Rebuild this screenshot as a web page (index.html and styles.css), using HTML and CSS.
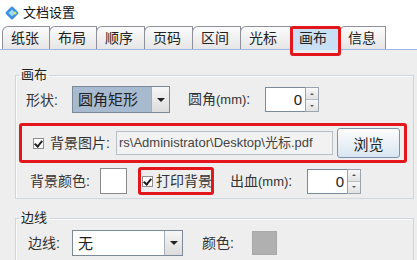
FILE: index.html
```html
<!DOCTYPE html>
<html lang="zh-CN">
<head>
    <meta charset="UTF-8">
    <title>文档设置</title>
    <link rel="stylesheet" href="styles.css">
</head>
<body>
    <div class="window">
        <div class="titlebar">
            <svg class="app-icon" width="16" height="16" viewBox="0 0 16 16">
                <rect x="3" y="3" width="10" height="10" rx="1.5" transform="rotate(45 8 8)" fill="#3b8fe0"/>
                <rect x="5.5" y="5.5" width="5" height="5" transform="rotate(45 8 8)" fill="#9fd6f7"/>
                <circle cx="11" cy="8" r="1.6" fill="#c8e86a"/>
            </svg>
            <span class="title">文档设置</span>
        </div>

        <div class="tabs">
            <div class="tab" style="width: 48px">纸张</div>
            <div class="tab" style="width: 48px">布局</div>
            <div class="tab" style="width: 49px">顺序</div>
            <div class="tab" style="width: 49px">页码</div>
            <div class="tab" style="width: 49px">区间</div>
            <div class="tab" style="width: 51px">光标</div>
            <div class="tab active" style="width: 50px">画布</div>
            <div class="tab" style="width: 47px">信息</div>
        </div>

        <div class="content">
            <fieldset class="group canvas-group">
                <legend>画布</legend>

                <div class="row row-shape">
                    <span class="label shape-label">形状:</span>
                    <div class="combo combo-selected shape-combo">
                        <span class="combo-value">圆角矩形</span>
                        <span class="combo-arrow"></span>
                    </div>
                    <span class="label radius-label">圆角<small>(mm)</small>:</span>
                    <div class="spinner">
                        <span class="spinner-value">0</span>
                        <span class="spinner-buttons">
                            <span class="spin-up"></span>
                            <span class="spin-down"></span>
                        </span>
                    </div>
                </div>

                <div class="row mark mark-image">
                    <span class="check checked"></span>
                    <span class="label image-label">背景图片:</span>
                    <div class="path-field">rs\Administrator\Desktop\光标.pdf</div>
                    <button class="btn">浏览</button>
                </div>

                <div class="row row-color">
                    <span class="label color-label">背景颜色:</span>
                    <span class="swatch swatch-white"></span>
                    <span class="mark mark-print">
                        <span class="check checked"></span>
                        <span class="label">打印背景</span>
                    </span>
                    <span class="label bleed-label">出血<small>(mm)</small>:</span>
                    <div class="spinner">
                        <span class="spinner-value">0</span>
                        <span class="spinner-buttons">
                            <span class="spin-up"></span>
                            <span class="spin-down"></span>
                        </span>
                    </div>
                </div>
            </fieldset>

            <fieldset class="group border-group">
                <legend>边线</legend>
                <div class="row row-border">
                    <span class="label border-label">边线:</span>
                    <div class="combo border-combo">
                        <span class="combo-value">无</span>
                        <span class="combo-arrow"></span>
                    </div>
                    <span class="label line-color-label">颜色:</span>
                    <span class="swatch swatch-gray"></span>
                </div>
            </fieldset>
        </div>
    </div>
</body>
</html>
```

FILE: styles.css
```css
* {
    margin: 0;
    padding: 0;
    box-sizing: border-box;
}

body {
    width: 417px;
    height: 260px;
    overflow: hidden;
    background-color: #eeeeee;
    color: #222222;
    font-family: 'Liberation Sans', 'Noto Sans CJK SC', sans-serif;
    font-size: 14px;
    line-height: 16px;
}

/* title bar */
.titlebar {
    height: 25px;
    background-color: #ffffff;
    display: flex;
    align-items: center;
    padding-left: 4px;
    gap: 3px;
}

.title {
    font-size: 13px;
    color: #111111;
}

/* tab strip */
.tabs {
    height: 25px;
    display: flex;
    align-items: flex-end;
    padding-left: 2px;
    background-color: #ffffff;
    border-bottom: 1px solid #9cb8dc;
}

.tab {
    height: 23px;
    border: 1px solid #8d9099;
    border-bottom: none;
    border-top-left-radius: 6px;
    margin-right: -1px;
    background: linear-gradient(#fbfbfb, #e6e6e6);
    padding-left: 8px;
    line-height: 22px;
    font-size: 14px;
    position: relative;
}

.tab.active {
    background: #c8dff4;
    height: 24px;
    margin-bottom: -1px;
    z-index: 1;
}

.tab.active::after {
    content: '';
    position: absolute;
    left: -1px;
    right: -2px;
    top: -1px;
    bottom: -6px;
    border: 3px solid #e3161c;
    border-radius: 3px;
}

/* groups */
.content {
    padding-top: 17px;
}

.group {
    margin: 0 3px 0 15px;
    border: 1px solid #cfd6dd;
    box-shadow: inset 1px 1px 0 #fafafa;
    padding: 0;
}

.group legend {
    font-size: 13px;
    line-height: 16px;
    padding: 0 2px;
    margin-left: 3px;
}

.canvas-group {
    padding-bottom: 3px;
}

.border-group {
    margin-top: 11px;
    height: 60px;
}

.row {
    display: flex;
    align-items: center;
}

.label {
    white-space: nowrap;
    color: #333333;
}

.label small {
    font-size: 13px;
}

/* row: shape */
.row-shape {
    margin-top: 3px;
    height: 27px;
    padding-left: 10px;
}

.shape-label {
    width: 46px;
}

.radius-label {
    margin-left: 18px;
    width: 77px;
}

/* combo boxes */
.combo {
    display: flex;
    height: 27px;
    border: 1px solid #7b8a99;
    background-color: #ffffff;
}

.combo-selected .combo-value {
    background-color: #a8bad0;
}

.shape-combo {
    width: 98px;
}

.border-combo {
    width: 111px;
    height: 26px;
}

.combo-value {
    flex: 1;
    padding-left: 5px;
    line-height: 25px;
    font-size: 15px;
}

.combo-arrow {
    width: 18px;
    border-left: 1px solid #a6b0ba;
    background: linear-gradient(#f6f6f6, #dcdcdc);
    display: flex;
    align-items: center;
    justify-content: center;
}

.combo-arrow::before {
    content: '';
    border-left: 4px solid transparent;
    border-right: 4px solid transparent;
    border-top: 4px solid #222222;
}

/* spinners */
.spinner {
    display: flex;
    width: 54px;
    height: 25px;
}

.spinner-value {
    flex: 1;
    background-color: #ffffff;
    border: 1px solid #7b8a99;
    border-right: none;
    text-align: right;
    padding-right: 3px;
    line-height: 23px;
    font-size: 15px;
}

.spinner-buttons {
    width: 14px;
    display: flex;
    flex-direction: column;
    border: 1px solid #9aa4ae;
}

.spin-up,
.spin-down {
    flex: 1;
    background: linear-gradient(#f8f8f8, #e2e2e2);
    display: flex;
    align-items: center;
    justify-content: center;
}

.spin-up {
    border-bottom: 1px solid #b4bcc4;
}

.spin-up::before {
    content: '';
    border-left: 2px solid transparent;
    border-right: 2px solid transparent;
    border-bottom: 2px solid #555555;
}

.spin-down::before {
    content: '';
    border-left: 2px solid transparent;
    border-right: 2px solid transparent;
    border-top: 2px solid #555555;
}

/* checkboxes */
.check {
    width: 11px;
    height: 11px;
    border: 1px solid #8f8f8f;
    background-color: #ffffff;
    position: relative;
    flex-shrink: 0;
}

.check.checked::after {
    content: '';
    position: absolute;
    left: 2px;
    top: 0;
    width: 3px;
    height: 6px;
    border-right: 2px solid #222222;
    border-bottom: 2px solid #222222;
    transform: rotate(40deg);
}

/* red highlight marks */
.mark {
    border: 3px solid #e3161c;
    border-radius: 3px;
}

.mark-image {
    margin: 10px 0 0 3px;
    width: 388px;
    height: 40px;
    padding-left: 11px;
}

.image-label {
    margin-left: 6px;
    width: 66px;
}

.path-field {
    width: 217px;
    height: 24px;
    border: 1px solid #b8bec5;
    background-color: #f2f2f2;
    color: #444444;
    font-size: 13px;
    line-height: 22px;
    padding-left: 2px;
    white-space: nowrap;
    overflow: hidden;
}

.btn {
    margin-left: 4px;
    width: 63px;
    height: 30px;
    border: 1px solid #7d93ad;
    border-radius: 3px;
    background: linear-gradient(#fdfdfd, #d9e5f1);
    font-family: inherit;
    font-size: 15px;
    color: #222222;
}

/* row: colour */
.row-color {
    margin-top: 4px;
    height: 28px;
    padding-left: 14px;
}

.color-label {
    width: 70px;
}

.swatch {
    display: block;
    border: 1px solid #8a8a8a;
}

.swatch-white {
    width: 27px;
    height: 26px;
    background-color: #ffffff;
}

.mark-print {
    display: flex;
    align-items: center;
    margin-left: 11px;
    width: 76px;
    height: 28px;
    padding-left: 1px;
}

.mark-print .label {
    margin-left: 3px;
    font-size: 14px;
}

.bleed-label {
    margin-left: 16px;
    width: 77px;
}

/* row: border */
.row-border {
    margin-top: 4px;
    height: 26px;
    padding-left: 12px;
}

.border-label {
    width: 44px;
}

.line-color-label {
    margin-left: 19px;
    width: 50px;
}

.swatch-gray {
    width: 25px;
    height: 24px;
    background-color: #b0b0b0;
    border-color: #a8a8a8;
}
```
